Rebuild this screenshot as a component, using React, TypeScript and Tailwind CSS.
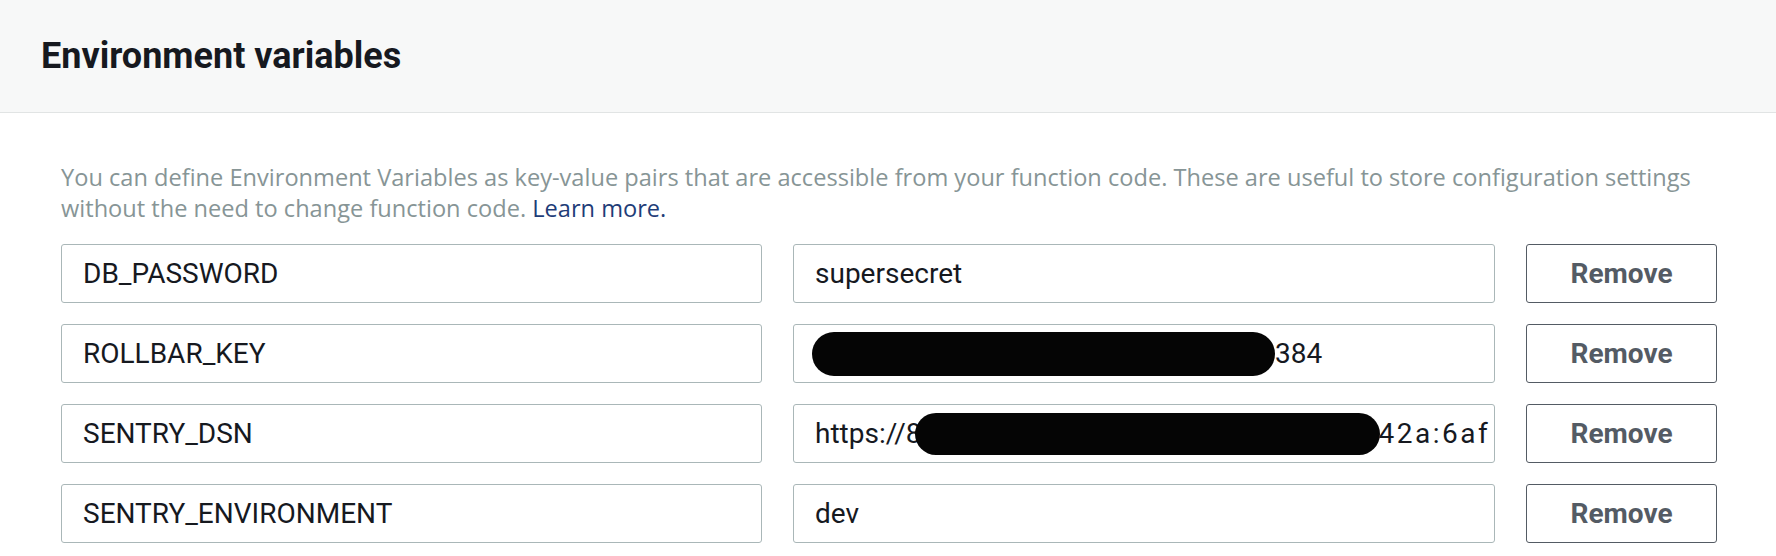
import React from "react";

const rows = [
  { key: "DB_PASSWORD", value: "plain", text: "supersecret" },
  { key: "ROLLBAR_KEY", value: "rollbar" },
  { key: "SENTRY_DSN", value: "sentry" },
  { key: "SENTRY_ENVIRONMENT", value: "plain", text: "dev" },
];

function ValueContent({ kind, text }: { kind: string; text?: string }) {
  if (kind === "rollbar") {
    return (
      <div className="flex items-center pl-[18px] whitespace-nowrap">
        <span className="inline-block w-[463px] h-[44px] rounded-full bg-[#050505] shrink-0" />
        <span>384</span>
      </div>
    );
  }
  if (kind === "sentry") {
    return (
      <div className="flex items-center pl-[21px] whitespace-nowrap">
        <span>https://8</span>
        <span className="inline-block w-[465px] h-[42px] rounded-full bg-[#050505] ml-[-6px] shrink-0" />
        <span className="ml-[-2px] tracking-[2.5px]">42a:6af</span>
      </div>
    );
  }
  return <div className="pl-[21px] whitespace-nowrap">{text}</div>;
}

export default function App() {
  return (
    <div
      className="w-[1776px] h-[556px] bg-white overflow-hidden text-[#16191f]"
      style={{ fontFamily: "Roboto, 'Open Sans', sans-serif" }}
    >
      <div className="h-[113px] bg-[#f7f8f8] border-b border-[#e1e4e4] flex items-center pl-[41px]">
        <h1 className="text-[36px] font-bold text-[#16191f] leading-none">Environment variables</h1>
      </div>
      <div className="pl-[61px] pr-[59px]">
        <p
          className="mt-[49px] w-[1690px] text-[23.6px] leading-[31px] text-[#879596]"
          style={{ fontFamily: "'Open Sans', sans-serif" }}
        >
          You can define Environment Variables as key-value pairs that are accessible from your function code. These are useful to store configuration settings without the need to change function code.{" "}
          <span className="text-[#1f3d78]">Learn more.</span>
        </p>
        <div className="mt-[20px] flex flex-col gap-[21px]">
          {rows.map((r) => (
            <div key={r.key} className="flex gap-[31px]">
              <div className="w-[701px] h-[59px] border border-[#aab7b8] rounded-[3px] flex items-center pl-[21px] text-[28px] text-[#16191f]">
                {r.key}
              </div>
              <div className="w-[702px] h-[59px] border border-[#aab7b8] rounded-[3px] flex items-center text-[28px] text-[#16191f] overflow-hidden">
                <ValueContent kind={r.value} text={r.text} />
              </div>
              <button className="w-[191px] h-[59px] border border-[#545b64] rounded-[3px] bg-white text-[28px] font-bold text-[#545b64]">
                Remove
              </button>
            </div>
          ))}
        </div>
      </div>
    </div>
  );
}
